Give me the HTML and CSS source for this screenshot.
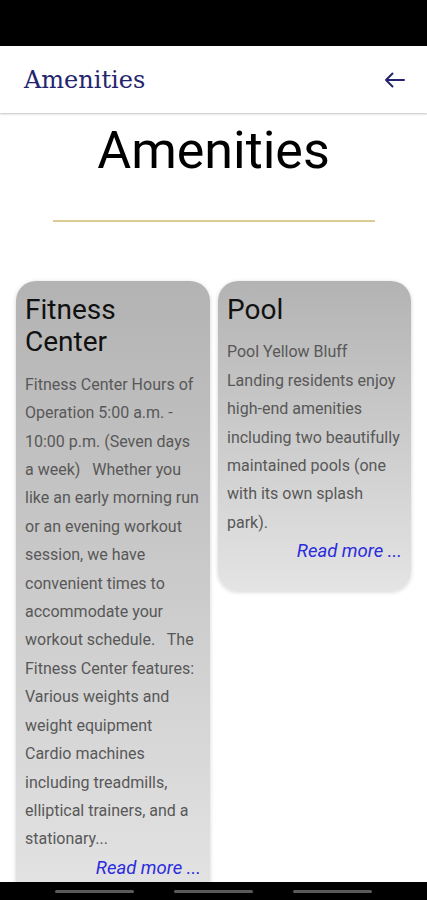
FILE: index.html
```html
<!DOCTYPE html>
<html lang="en">

<head>
  <meta charset="UTF-8">
  <meta name="viewport" content="width=device-width, initial-scale=1.0">
  <title>Amenities</title>
  <link rel="stylesheet" href="styles.css">
</head>

<body>
  <div class="phone">
    <div class="status-bar"></div>

    <header class="app-bar">
      <span class="app-title">Amenities</span>
      <svg class="back" width="24" height="24" viewBox="0 0 24 24">
        <path d="M3 12H21M9.5 5.5L3 12L9.5 18.5" fill="none" stroke="#24246e" stroke-width="2" stroke-linecap="round" stroke-linejoin="round" />
      </svg>
    </header>

    <main class="content">
      <h1 class="page-title">Amenities</h1>
      <div class="divider"></div>

      <div class="cards">
        <div class="card">
          <h2>Fitness Center</h2>
          <p>Fitness Center Hours of Operation 5:00 a.m. - 10:00 p.m. (Seven days a week)&nbsp;&nbsp; Whether you like an early morning run or an evening workout session, we have convenient times to accommodate your workout schedule.&nbsp;&nbsp; The Fitness Center features: Various weights and weight equipment Cardio machines including treadmills, elliptical trainers, and a stationary...</p>
          <a class="more" href="#">Read more ...</a>
        </div>
        <div class="card">
          <h2>Pool</h2>
          <p>Pool Yellow Bluff Landing residents enjoy high-end amenities including two beautifully maintained pools (one with its own splash park).</p>
          <a class="more" href="#">Read more ...</a>
        </div>
      </div>
    </main>

    <div class="nav-bar">
      <span></span>
      <span></span>
      <span></span>
    </div>
  </div>
</body>

</html>
```

FILE: styles.css
```css
* {
  box-sizing: border-box;
}

body {
  margin: 0;
  background: #fff;
  font-family: Roboto, "Liberation Sans", sans-serif;
}

.phone {
  height: 900px;
  display: flex;
  flex-direction: column;
  overflow: hidden;
}

.status-bar {
  height: 46px;
  background: #000;
  flex-shrink: 0;
}

.app-bar {
  height: 67px;
  flex-shrink: 0;
  display: flex;
  align-items: center;
  justify-content: space-between;
  padding: 0 20px 0 24px;
  background: #fff;
  box-shadow: 0 1px 2px rgba(0, 0, 0, 0.25);
  position: relative;
  z-index: 1;
}

.app-title {
  font-family: "DejaVu Serif", serif;
  font-size: 24px;
  color: #24246e;
}

.content {
  flex: 1;
  overflow: hidden;
}

.page-title {
  margin: 8px 0 0;
  font-size: 52px;
  font-weight: 400;
  line-height: 60px;
  text-align: center;
  color: #000;
}

.divider {
  width: 322px;
  height: 2px;
  margin: 39px auto 0;
  background: #dccb93;
}

.cards {
  display: grid;
  grid-template-columns: 194px 193px;
  gap: 8px;
  padding: 0 16px;
  margin-top: 59px;
  align-items: start;
}

.card {
  border-radius: 20px;
  padding: 13px 9px 25px;
  background: linear-gradient(#b3b3b3, #e4e4e4);
  box-shadow: 0 1px 4px rgba(0, 0, 0, 0.18);
}

.card h2 {
  margin: 0;
  font-size: 28px;
  font-weight: 400;
  line-height: 32.4px;
  color: #111;
}

.card p {
  margin: 12px 0 0;
  font-size: 16px;
  line-height: 28.4px;
  color: #585858;
}

.more {
  display: block;
  text-align: right;
  font-size: 18.5px;
  font-style: italic;
  line-height: 28.4px;
  color: #2b2bdc;
  text-decoration: none;
}

.nav-bar {
  height: 18px;
  flex-shrink: 0;
  background: #000;
  display: flex;
  justify-content: center;
  gap: 40px;
  padding-top: 8px;
}

.nav-bar span {
  width: 79px;
  height: 3px;
  border-radius: 2px;
  background: #5a5a5a;
}
```
